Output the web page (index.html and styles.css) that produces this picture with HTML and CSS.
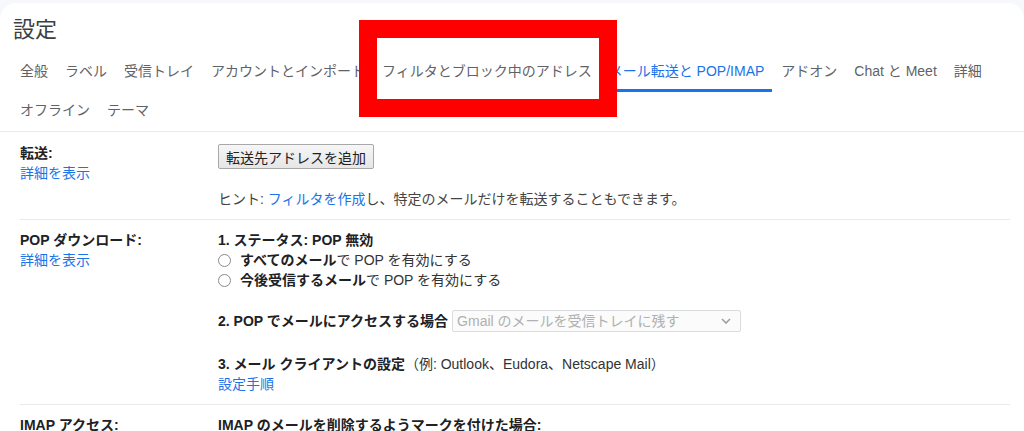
FILE: index.html
```html
<!DOCTYPE html>
<html lang="ja">
<head>
    <meta charset="UTF-8">
    <meta name="viewport" content="width=device-width, initial-scale=1.0">
    <title>設定</title>
    <link rel="stylesheet" href="styles.css">
</head>
<body>
    <div class="page">
        <h1 class="page-title">設定</h1>

        <!-- Settings tabs -->
        <nav class="tabs">
            <div class="tab-row">
                <a class="tab">全般</a>
                <a class="tab">ラベル</a>
                <a class="tab">受信トレイ</a>
                <a class="tab">アカウントとインポート</a>
                <a class="tab">フィルタとブロック中のアドレス</a>
                <a class="tab active">メール転送と POP/IMAP</a>
                <a class="tab">アドオン</a>
                <a class="tab">Chat と Meet</a>
                <a class="tab">詳細</a>
            </div>
            <div class="tab-row">
                <a class="tab">オフライン</a>
                <a class="tab">テーマ</a>
            </div>
        </nav>

        <!-- Annotation box -->
        <div class="highlight"></div>

        <!-- Forwarding -->
        <div class="section">
            <div class="label">
                <div class="label-title">転送:</div>
                <a class="link">詳細を表示</a>
            </div>
            <div class="content">
                <button class="btn">転送先アドレスを追加</button>
                <p class="hint">ヒント: <a class="link">フィルタを作成</a>し、特定のメールだけを転送することもできます。</p>
            </div>
        </div>

        <!-- POP -->
        <div class="section">
            <div class="label">
                <div class="label-title">POP ダウンロード:</div>
                <a class="link">詳細を表示</a>
            </div>
            <div class="content">
                <div class="line"><b>1. ステータス: POP 無効</b></div>
                <label class="radio-line"><span class="radio"></span><b>すべてのメール</b>で POP を有効にする</label>
                <label class="radio-line"><span class="radio"></span><b>今後受信するメール</b>で POP を有効にする</label>

                <div class="select-row">
                    <b>2. POP でメールにアクセスする場合</b>
                    <div class="select">
                        <span>Gmail のメールを受信トレイに残す</span>
                        <svg width="10" height="6" viewBox="0 0 10 6"><path d="M1 1l4 4 4-4" fill="none" stroke="#9aa0a6" stroke-width="1.6"/></svg>
                    </div>
                </div>

                <div class="line step3"><b>3. メール クライアントの設定</b>（例: Outlook、Eudora、Netscape Mail）</div>
                <a class="link line">設定手順</a>
            </div>
        </div>

        <!-- IMAP -->
        <div class="section">
            <div class="label">
                <div class="label-title">IMAP アクセス:</div>
            </div>
            <div class="content">
                <div class="line"><b>IMAP のメールを削除するようマークを付けた場合:</b></div>
            </div>
        </div>
    </div>
</body>
</html>
```

FILE: styles.css
```css
body {
    margin: 0;
    padding: 0;
    background-color: #f6f8fc;
    font-family: "Liberation Sans", "Noto Sans CJK JP", sans-serif;
    font-size: 14px;
    color: #222;
    overflow: hidden;
}

.page {
    position: relative;
    margin-top: 3px;
    background-color: #fff;
    border-radius: 16px 16px 0 0;
    min-height: 600px;
}

.page-title {
    margin: 0;
    padding: 13px 13px 0;
    font-size: 22px;
    line-height: 28px;
    font-weight: normal;
    color: #3c4043;
}

.tabs {
    margin-top: 9px;
    padding: 0 12px;
    border-bottom: 1px solid #e8eaed;
}

.tab-row {
    display: flex;
}

.tab {
    padding: 0 8px;
    margin-right: 1px;
    line-height: 36px;
    border-bottom: 3px solid transparent;
    color: #5f6368;
    white-space: nowrap;
    cursor: pointer;
}

.tab.active {
    color: #1a73e8;
    border-bottom-color: #1a73e8;
}

.highlight {
    position: absolute;
    left: 359px;
    top: 17px;
    width: 222px;
    height: 61px;
    border: 18px solid #fe0000;
}

.section {
    display: flex;
    margin: 0 14px 0 20px;
    padding: 10px 0;
    border-bottom: 1px solid #e8eaed;
    line-height: 20px;
}

.section:nth-of-type(2) {
    padding-top: 11px;
}

.label {
    width: 198px;
    flex-shrink: 0;
}

.label-title {
    font-weight: bold;
    color: #202124;
}

.link {
    display: block;
    color: #1a73e8;
    text-decoration: none;
    cursor: pointer;
}

.hint .link {
    display: inline;
}

.content {
    flex: 1;
    color: #333;
}

.content b {
    color: #202124;
}

.btn {
    display: block;
    margin-top: 1px;
    height: 25px;
    padding: 0 7px;
    font-family: inherit;
    font-size: 14px;
    color: #222;
    background: linear-gradient(#f6f6f6, #e6e6e6);
    border: 1px solid #a8a8a8;
    border-radius: 2px;
}

.hint {
    margin: 20px 0 0;
    color: #444;
}

.radio-line {
    display: flex;
    align-items: center;
}

.radio {
    width: 11px;
    height: 11px;
    border: 1px solid #8a8a8a;
    border-radius: 50%;
    margin-right: 9px;
}

.select-row {
    display: flex;
    align-items: center;
    margin-top: 20px;
    height: 22px;
}

.select {
    display: flex;
    align-items: center;
    justify-content: space-between;
    box-sizing: border-box;
    width: 289px;
    height: 22px;
    margin-left: 4px;
    padding: 0 9px 0 4px;
    border: 1px solid #dadce0;
    border-radius: 2px;
    background-color: #fbfbfb;
    color: #b0b0b0;
}

.step3 {
    margin-top: 22px;
}
```
